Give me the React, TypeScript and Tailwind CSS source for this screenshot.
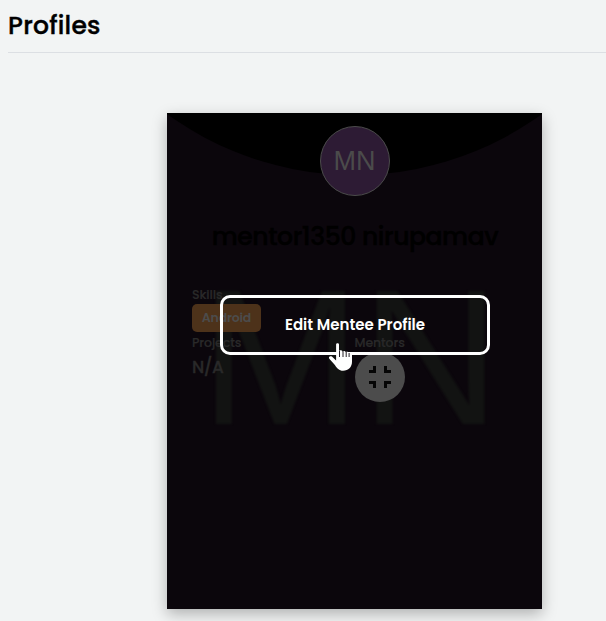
import React from "react";

function CompressIcon() {
  return (
    <svg className="size-[22px]" viewBox="0 0 22 22" fill="#050505">
      <path d="M0 4h4V0h3v7H0zM15 0h3v4h4v3h-7zM0 15h7v7H4v-4H0zM15 15h7v3h-4v4h-3z" />
    </svg>
  );
}

function HandPointer() {
  return (
    <svg className="absolute left-[161px] top-[229px] h-[30px] w-[25px]" viewBox="0 0 25 30" fill="#fff">
      <path d="M8.1 2.6C8.1 .8 11 .8 11 2.6V8.8c.8-.8 3-.6 3.4.6 1-.7 2.8-.5 3.3.7 1-.6 2.7-.4 3.1.8 1.4-.5 3.2.1 3.2 1.7v7.2c0 5.2-3.6 9-8.9 9-4 0-6.2-2.6-8.2-5.8L1.3 16.8c-1.2-2 .8-3.4 2.6-2.2l4.2 3.8z" />
      <path d="M11.5 8.5v6.5M15 9v6M18.2 9.6v5.4M21.1 11v4" stroke="#0b060c" strokeWidth=".9" />
    </svg>
  );
}

export default function App() {
  return (
    <main className="h-[621px] w-full overflow-hidden bg-[#f2f4f4] pl-2 font-['Poppins','Inter',sans-serif]">
      <header className="h-[53px] border-b border-[#dcdfe3] pt-2">
        <h1 className="text-[25px] font-medium leading-9 tracking-[0.25px] text-black [-webkit-text-stroke:0.4px_black]">Profiles</h1>
      </header>

      <section className="relative ml-[159px] mt-[60px] h-[496px] w-[375px] bg-[#0b060c] shadow-[0_5px_14px_rgba(0,0,0,0.28)]">
        <div className="absolute inset-0 overflow-hidden">
          <div className="absolute bottom-[434px] left-[-131px] size-[637px] rounded-full bg-black" />
          <div className="absolute left-[33px] top-[148px] whitespace-nowrap font-['Liberation_Sans'] text-[193px] leading-[193px] text-[#121312] blur-[1px]">MN</div>
        </div>

        <div className="relative flex flex-col pt-[13px]">
          <div className="mx-auto flex size-[70px] items-center justify-center rounded-full border border-[#4b4b4b] bg-[#2d1b34] font-['Liberation_Sans'] text-[27px] text-[#4b4b4b]">MN</div>
          <h2 className="mt-[23px] whitespace-nowrap pl-[1px] text-center text-[25px] font-medium leading-9 tracking-[-0.4px] text-black [-webkit-text-stroke:0.4px_black]">mentor1350 nirupamav</h2>
          <div className="mt-[31px] px-[25px] text-[12.5px] font-medium leading-[18px] text-[#292929]">
            <p className="tracking-[-0.1px] [-webkit-text-stroke:0.2px_#292929]">Skills</p>
            <span className="flex h-7 w-[69px] items-center justify-center rounded-[5px] bg-[#4d321a] text-[12.5px] font-semibold tracking-[-0.2px] text-[#4c4c4c]">Android</span>
            <div className="mt-[2px] grid grid-cols-2">
              <div>
                <p className="tracking-[-0.1px] [-webkit-text-stroke:0.2px_#292929]">Projects</p>
                <p className="mt-[3px] text-[17px] leading-6 tracking-[-0.5px] [-webkit-text-stroke:0.3px_#292929]">N/A</p>
              </div>
              <div>
                <p className="tracking-[-0.1px] [-webkit-text-stroke:0.2px_#292929]">Mentors</p>
                <span className="flex size-[50px] items-center justify-center rounded-full bg-[#4c4c4c]"><CompressIcon /></span>
              </div>
            </div>
          </div>
        </div>

        <button className="absolute left-[53px] top-[182px] flex h-[60px] w-[270px] items-center justify-center rounded-[10px] border-[3px] border-white text-[15px] font-semibold tracking-[0.02px] text-white">
          Edit Mentee Profile
        </button>
        <HandPointer />
      </section>
    </main>
  );
}
